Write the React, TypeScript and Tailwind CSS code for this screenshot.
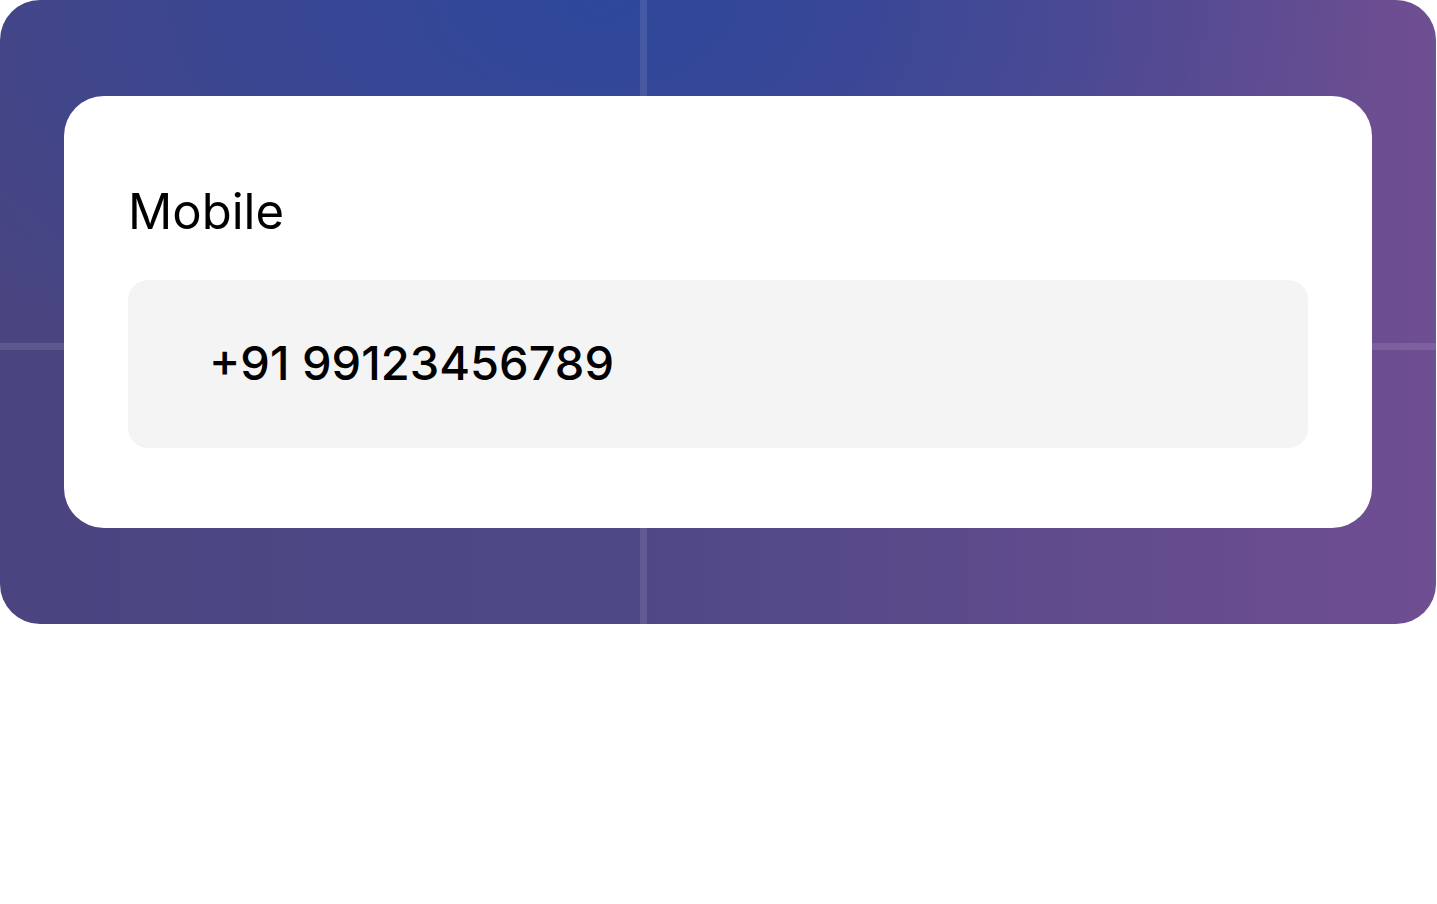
import React from "react";

export default function App() {
  return (
    <div className="w-[1437px] h-[904px] bg-white" style={{ fontFamily: "Inter, 'Noto Sans', sans-serif" }}>
      <div className="relative w-[1436px] h-[624px] rounded-[40px] overflow-hidden bg-[radial-gradient(ellipse_55%_75%_at_42%_0%,rgba(46,71,156,1)_0%,rgba(46,71,156,0.55)_50%,rgba(46,71,156,0)_100%),linear-gradient(90deg,#4a4581_0%,#4f4887_45%,#6f4e92_100%)] pt-[96px] px-[64px]">
        <div className="absolute top-0 bottom-0 left-[640px] w-[7px] bg-white/10" />
        <div className="absolute left-0 right-0 top-[343px] h-[7px] bg-white/10" />
        <div className="relative rounded-[40px] bg-white px-[64px] pt-[88px] pb-[80px]">
          <div className="text-[49px] leading-[56px] text-black font-normal">Mobile</div>
          <div className="mt-[40px] h-[168px] rounded-[20px] bg-[#f4f4f4] flex items-center pl-[81px] pb-[4px]">
            <span className="text-[47px] leading-none font-medium text-black">+91 99123456789</span>
          </div>
        </div>
      </div>
    </div>
  );
}
